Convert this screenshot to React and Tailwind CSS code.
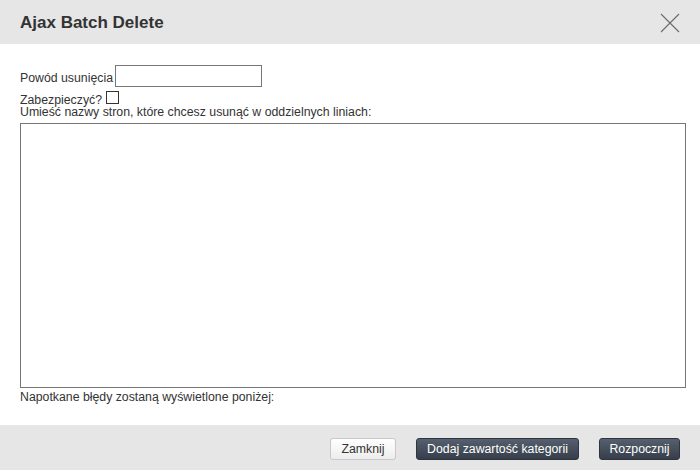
import React from "react";

const font = { fontFamily: '"Liberation Sans", Arial, sans-serif' };

const App = () => {
  return (
    <div
      className="w-[700px] h-[470px] flex flex-col bg-white text-[#333]"
      style={font}
    >
      {/* Header */}
      <div className="h-[44px] shrink-0 bg-[#e6e6e6] flex items-center justify-between pl-[20px] pr-[20px]">
        <h1 className="text-[17px] leading-[20px] font-bold pt-[2px] text-[#333]">
          Ajax Batch Delete
        </h1>
        <svg width="20" height="20" viewBox="0 0 20 20" className="mt-[2px]">
          <path d="M1 1 L19 19 M19 1 L1 19" stroke="#6b6b6b" strokeWidth="1.1" fill="none" />
        </svg>
      </div>

      {/* Body */}
      <div className="flex-1 pl-[20px] pr-[14px] text-[12.3px]">
        <div className="mt-[21px] flex items-end h-[22px]">
          <span className="leading-[14px] mb-[2px]">Powód usunięcia</span>
          <input
            type="text"
            className="ml-[2px] w-[147px] h-[22px] border border-[#767676] bg-white outline-none"
          />
        </div>

        <div className="mt-[4px] h-[15px] flex items-start">
          <span className="leading-[12px] mt-[3px]">Zabezpieczyć?</span>
          <span className="ml-[4px] w-[13px] h-[13px] border border-[#333] bg-white" />
        </div>

        <div className="leading-[12px]">
          Umieść nazwy stron, które chcesz usunąć w oddzielnych liniach:
        </div>

        <textarea className="mt-[5px] block w-[666px] h-[265px] border border-[#767676] resize-none outline-none" />

        <div className="mt-[2px] leading-[14px]">
          Napotkane błędy zostaną wyświetlone poniżej:
        </div>
      </div>

      {/* Footer */}
      <div className="h-[45px] shrink-0 bg-[#e6e6e6] flex items-start justify-end gap-[20px] pr-[20px] pt-[13px] text-[12.3px]">
        <button className="w-[66px] h-[22px] rounded-[3px] border border-[#c8c8c8] bg-gradient-to-b from-white to-[#ededed] text-[#333]">
          Zamknij
        </button>
        <button className="w-[163px] h-[22px] rounded-[3px] border border-[#2e3540] bg-gradient-to-b from-[#56606e] to-[#363e4a] text-white">
          Dodaj zawartość kategorii
        </button>
        <button className="w-[81px] h-[22px] rounded-[3px] border border-[#2e3540] bg-gradient-to-b from-[#56606e] to-[#363e4a] text-white">
          Rozpocznij
        </button>
      </div>
    </div>
  );
};

export default App;
